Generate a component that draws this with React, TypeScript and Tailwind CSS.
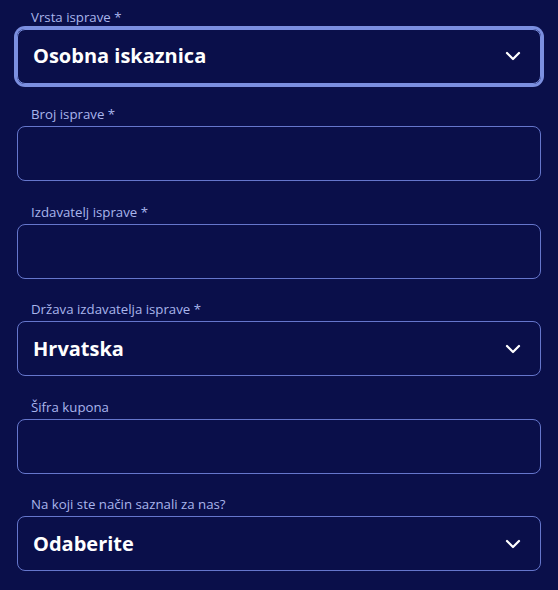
import { ChevronDown } from 'lucide-react'

type Field = {
  label: string
  value?: string
  select?: boolean
  focused?: boolean
}

const FIELDS: Field[] = [
  { label: 'Vrsta isprave *', value: 'Osobna iskaznica', select: true, focused: true },
  { label: 'Broj isprave *' },
  { label: 'Izdavatelj isprave *' },
  { label: 'Država izdavatelja isprave *', value: 'Hrvatska', select: true },
  { label: 'Šifra kupona' },
  { label: 'Na koji ste način saznali za nas?', value: 'Odaberite', select: true },
]

export default function App() {
  return (
    <div
      className="min-h-[590px] w-full bg-[#0a0f4a] px-[17px] pt-[7.5px] flex flex-col gap-[21.5px]"
      style={{ fontFamily: '"Open Sans", "Noto Sans", sans-serif' }}
    >
      {FIELDS.map((field) => (
        <div key={field.label} className="flex flex-col gap-[3px]">
          <label className="pl-[14px] text-[13.25px] leading-[18px] text-[#a9b5ec]">{field.label}</label>
          <div
            className={
              field.focused
                ? 'h-[55px] rounded-[8px] border border-[#7b8fe0] ring-[3px] ring-[#7b8fe0] flex items-center pl-[15px] pr-[15px]'
                : 'h-[55px] rounded-[8px] border border-[#6576cc] flex items-center pl-[15px] pr-[15px]'
            }
          >
            {field.value && (
              <span className="flex-1 text-[20px] font-bold text-white">{field.value}</span>
            )}
            {field.select && <ChevronDown className="w-6 h-6 text-white ml-auto" strokeWidth={2.25} />}
          </div>
        </div>
      ))}
    </div>
  )
}
